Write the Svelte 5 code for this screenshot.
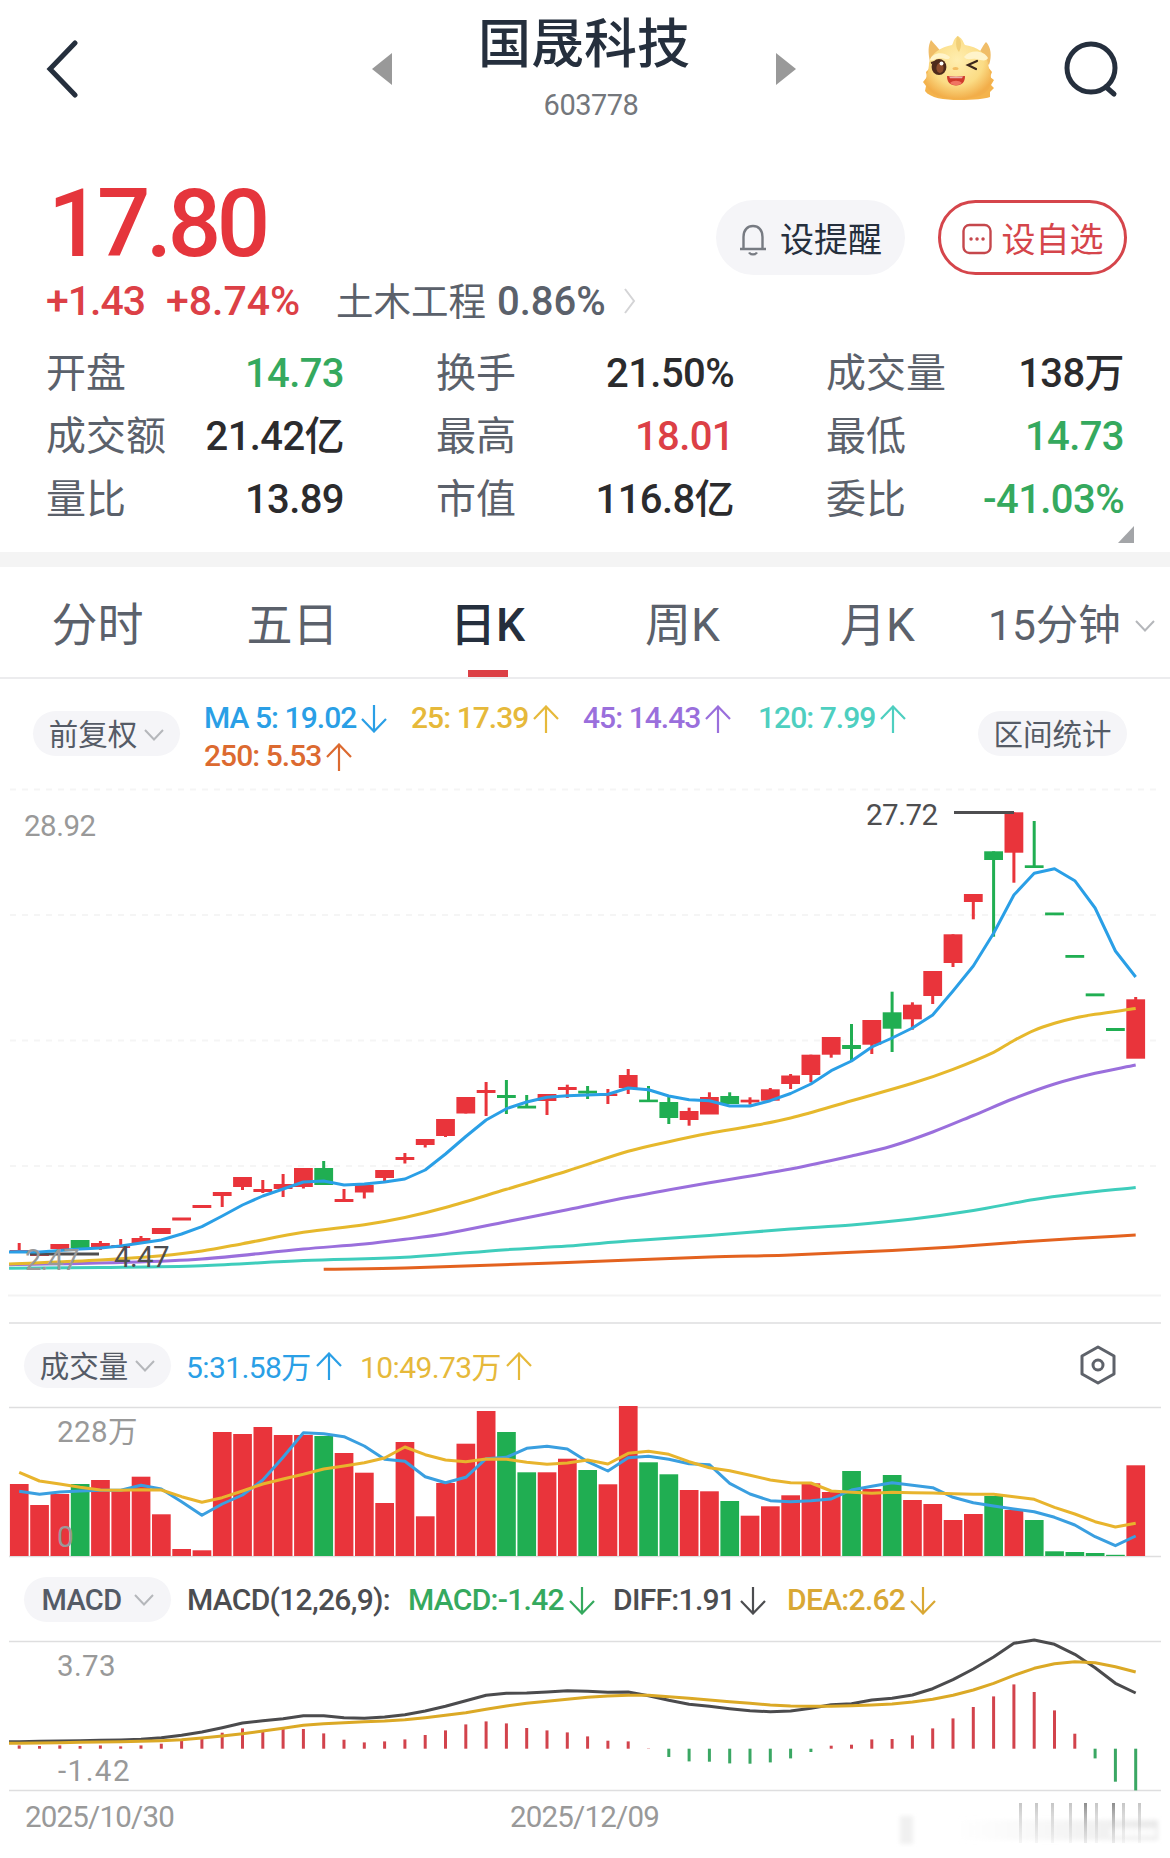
<script>
  const UP = '#e9343b';
  const DOWN = '#20ae52';
  const STEP = 20.3;
  const xAt = (i) => 19.2 + STEP * i;

  const stats = [
    ['开盘', '14.73', 'down'], ['换手', '21.50%', ''], ['成交量', '138万', ''],
    ['成交额', '21.42亿', ''], ['最高', '18.01', 'up'], ['最低', '14.73', 'down'],
    ['量比', '13.89', ''], ['市值', '116.8亿', ''], ['委比', '-41.03%', 'down']
  ];

  const tabs = ['分时', '五日', '日K', '周K', '月K'];

  const maLegend = [
    { text: 'MA 5: 19.02', dir: 'down', color: 'blue' },
    { text: '25: 17.39', dir: 'up', color: 'gold' },
    { text: '45: 14.43', dir: 'up', color: 'purple' },
    { text: '120: 7.99', dir: 'up', color: 'teal' },
    { text: '250: 5.53', dir: 'up', color: 'orange' }
  ];

  // [body top, body bottom, wick top, wick bottom]
  const candles = [
    [1250, 1253, 1243, 1253], [1253, 1256, 1253, 1256], [1244, 1249, 1244, 1249], [1240, 1248, 1240, 1248],
    [1243, 1247, 1241, 1250], [1245, 1248, 1239, 1248], [1238, 1243, 1236, 1243], [1228, 1234, 1228, 1234],
    [1217.5, 1220.5, 1218, 1220], [1205, 1208, 1205, 1208], [1192, 1196, 1192, 1207], [1177, 1187, 1177, 1190],
    [1189, 1192, 1180, 1193], [1184, 1189, 1174, 1197], [1168, 1187, 1168, 1188.5], [1168, 1185, 1161, 1185],
    [1199, 1202, 1189, 1202], [1185, 1192.5, 1185, 1198.5], [1170, 1178, 1170, 1181], [1157, 1160, 1153, 1163.5],
    [1139, 1145, 1139, 1147.5], [1119, 1136, 1119, 1137], [1097, 1113.5, 1097, 1113.5], [1090, 1093, 1082, 1116],
    [1095, 1098, 1080, 1114], [1105.7, 1108.5, 1095, 1108], [1094, 1101, 1094, 1115], [1087, 1090, 1084.7, 1098],
    [1090.7, 1093.5, 1086, 1099], [1093.5, 1096, 1089, 1104], [1075, 1088, 1069, 1094], [1099.6, 1102.2, 1086, 1102],
    [1102, 1118, 1095, 1124], [1111, 1120, 1107.7, 1125.7], [1097, 1114.5, 1092.3, 1114], [1096, 1104, 1092.3, 1104],
    [1099.7, 1102.4, 1097.3, 1104.7], [1089.3, 1100.7, 1088, 1100], [1075.5, 1084, 1074, 1089], [1054.7, 1075, 1054.7, 1082.3],
    [1037, 1054.7, 1037, 1057.7], [1045, 1049, 1024, 1061], [1020, 1044.7, 1020, 1054], [1012.3, 1028.7, 991.7, 1052],
    [1004.7, 1019.3, 1002.3, 1029.7], [971, 996, 971, 1004], [934.3, 963, 934.3, 967], [894, 902, 894, 919.3],
    [851.3, 860, 851.3, 936.7], [812.3, 852.7, 812.3, 882.7], [865.3, 868, 821, 868], [912.5, 915.3, 913, 915],
    [955, 957.8, 955, 957], [993.4, 996.3, 994, 996], [1028, 1031, 1028, 1030], [999.3, 1058.7, 997, 1058]
  ];

  const falling = new Set([3, 15, 24, 25, 28, 31, 32, 35, 41, 43, 48, 50, 51, 52, 53, 54]);
  const tone = (i) => (falling.has(i) ? DOWN : UP);

  const volumes = [
    72, 51, 62, 72, 76, 66, 79.3, 41.7, 7, 5.7, 124, 122, 129, 121, 121, 120, 103, 83.3, 53, 114, 39.7, 73,
    112.3, 145, 124, 83.7, 83.7, 97.3, 86, 71.7, 150, 93.7, 81.7, 66, 64.7, 55, 40.3, 49.7, 60.7, 72.7, 64,
    85, 67, 81, 56, 52, 36, 42, 60, 46, 36, 4.7, 4, 3, 1.2, 90.7
  ];

  const histogram = [
    3.3, 2.7, 3.3, 2.7, 3.3, 2.3, 3.3, 5, 7.7, 10.3, 16, 20.3, 17, 19.7, 19.7, 15.3, 9, 6.3, 7.3, 9.3, 13.7,
    18.3, 24.3, 27.3, 25.3, 20.7, 18.3, 16.3, 12.3, 8, 7.3, 0.3, -8.3, -12.7, -13, -14.7, -15, -13.7, -9.7,
    -3.3, 3, 4, 9.3, 9.7, 13.3, 20.3, 30.3, 41.7, 52.3, 64.3, 56.7, 38.3, 15, -9.7, -33, -41.7
  ];

  // Slow averages are sampled sparsely as { index: y } and smoothed
  const slowLines = [
    { color: '#e3621f', pts: { 15: 1269.3, 19: 1268, 27: 1262.5, 34: 1257, 38: 1255, 43: 1250.5, 46: 1247, 49: 1242.5, 52: 1238.5, 55: 1235 } },
    { color: '#3fcdbc', pts: { '-0.5': 1268.3, 4: 1267.5, 9: 1265.7, 14: 1260.5, 19: 1257.3, 24: 1249.7, 27: 1246, 30: 1241, 34: 1235.5, 38: 1229, 41: 1225, 44: 1219, 47: 1210.5, 50: 1199.5, 52: 1194, 55: 1187.5 } },
    { color: '#9a6fdc', pts: { '-0.5': 1264.7, 5: 1262.5, 9: 1259, 14: 1249, 17: 1244, 19: 1239.3, 21: 1233.7, 24: 1221.7, 27: 1209.7, 30: 1197.3, 34: 1182.7, 38: 1169, 41: 1156, 43: 1146, 45: 1132, 47: 1115.5, 49: 1098.5, 51: 1084, 53: 1073.3, 55: 1065 } },
    { color: '#e6b82c', pts: { '-0.5': 1264, 4: 1260, 7: 1255.7, 9: 1251, 11: 1243.7, 14: 1232.3, 17: 1224.7, 19: 1217.5, 21: 1207.5, 24: 1189.3, 27: 1171, 30: 1151.3, 32: 1141.7, 34: 1133.3, 36: 1126.3, 38: 1118, 41: 1100.7, 44: 1083.3, 46: 1069.3, 48: 1052.3, 49: 1040.5, 50: 1030.3, 51: 1023.3, 52: 1018, 53: 1014.3, 55: 1008.5 } }
  ];

  const ma5 = [
    1251.7, 1252, 1250.5, 1249, 1248, 1246, 1243, 1240, 1234, 1226.7, 1216, 1205, 1196, 1189, 1182, 1181, 1185,
    1184, 1182, 1179, 1170, 1154, 1136.5, 1120, 1108.7, 1102, 1097.3, 1095.7, 1095, 1094.3, 1088, 1089.7, 1096,
    1099.7, 1100.7, 1106, 1106, 1100.7, 1093.5, 1084, 1070.7, 1061, 1047, 1038, 1028, 1015, 991, 966, 933.3, 895,
    873.3, 868.7, 880.7, 908, 951, 977
  ];

  const scaled = (values, offset) => values.map((v) => v / 3 + offset);

  const volumeLines = [
    { color: '#3a9fe0', pts: scaled([514, 523, 516, 513, 511, 511, 496, 507, 545, 586, 552, 525, 480, 412, 338, 341, 350, 378, 418, 424, 470, 488, 472, 416, 412, 385, 379, 387, 425, 453, 413, 409, 418, 431, 434, 490, 522, 542, 545, 542, 537, 510, 499, 488, 496, 503, 532, 548, 558, 567, 575, 592, 615, 650, 677, 648], 1320) },
    { color: '#e8b42d', pts: scaled([457, 483, 492, 502, 510, 511, 509, 510, 530, 547, 533, 513, 492, 477, 463, 447, 438, 428, 414, 381, 404, 420, 425, 417, 418, 427, 433, 429, 420, 432, 400, 394, 403, 425, 443, 452, 466, 480, 488, 489, 513, 517, 520, 517, 518, 519, 521, 523, 523, 530, 538, 562, 582, 605, 621, 610], 1320) }
  ];

  const macdLines = [
    { color: '#4b4b4d', pts: scaled([515, 514, 513, 512, 511, 510, 508, 503, 496, 486, 473, 459, 452, 446, 437, 437, 443, 445, 441, 434, 423, 409, 392, 376, 370, 369, 366, 362, 364, 367, 366, 377, 391, 403, 409, 416, 422, 425, 423, 415, 404, 401, 390, 385, 375, 356, 329, 297, 261, 220, 210, 223, 253, 293, 340, 369], 1570) },
    { color: '#dba926', pts: scaled([520, 519, 518, 517, 516, 515, 514, 512, 509, 504, 498, 491, 483, 475, 466, 461, 458, 455, 453, 449, 443, 436, 428, 418, 408, 400, 394, 388, 382, 378, 376, 376, 380, 385, 390, 395, 400, 405, 408, 409, 409, 407, 405, 402, 396, 388, 376, 360, 340, 316, 295, 281, 275, 278, 290, 306], 1570) }
  ];

  const toPoints = (values) => values.map((y, i) => `${xAt(i).toFixed(1)},${y.toFixed(1)}`).join(' ');

  function toCurve(samples) {
    const p = Object.entries(samples)
      .map(([i, y]) => [xAt(Number(i)), y])
      .sort((a, b) => a[0] - b[0]);
    const slope = (k) => {
      const a = p[Math.max(k - 1, 0)];
      const b = p[Math.min(k + 1, p.length - 1)];
      return (b[1] - a[1]) / (b[0] - a[0]);
    };
    let d = `M${p[0]}`;
    for (let k = 1; k < p.length; k++) {
      const [x0, y0] = p[k - 1];
      const [x1, y1] = p[k];
      const dx = (x1 - x0) / 3;
      d += ` C${x0 + dx},${y0 + slope(k - 1) * dx} ${x1 - dx},${y1 - slope(k) * dx} ${x1},${y1}`;
    }
    return d;
  }

  const smudges = [1019, 1035, 1051, 1069, 1084, 1095, 1112, 1122, 1138];
</script>

{#snippet chevron()}
  <svg class="chevron" viewBox="0 0 20 12" width="20" height="12">
    <path d="M1 1 L10 10.5 L19 1" />
  </svg>
{/snippet}

{#snippet arrow(dir)}
  <svg class="arrow" viewBox="0 0 26 28" width="26" height="28">
    {#if dir === 'up'}
      <path d="M13 28 V2 M1 14 L13 1.5 L25 14" />
    {:else}
      <path d="M13 0 V26 M1 14 L13 26.5 L25 14" />
    {/if}
  </svg>
{/snippet}

<main>
  <header>
    <svg class="back" viewBox="0 0 32 58" width="32" height="58">
      <path d="M29 3 L4 29 L29 55" />
    </svg>
    <svg class="prev" viewBox="0 0 20 32" width="20" height="32"><path d="M20 0 V32 L0 16 Z" /></svg>
    <div class="title">
      <h1>国晟科技</h1>
      <span>603778</span>
    </div>
    <svg class="next" viewBox="0 0 20 32" width="20" height="32"><path d="M0 0 V32 L20 16 Z" /></svg>
    <svg class="mascot" viewBox="0 0 74 68" width="74" height="68">
      <defs>
        <radialGradient id="skin" cx="0.48" cy="0.38" r="0.62">
          <stop offset="0" stop-color="#ffeeb0" />
          <stop offset="0.65" stop-color="#fbdc85" />
          <stop offset="1" stop-color="#f2ae4a" />
        </radialGradient>
      </defs>
      <path fill="#f0bd68" d="M8 28 C6 18 6 12 9 6 C12 10 17 14 20 20 Z M56 20 C60 15 61 11 64 8 C69 13 70 22 67 31 Z" />
      <path fill="#f4b34c" d="M8 34 L4 38 L5 43 L1 48 L4 52 L3 57 C8 64 22 66 37 66 C53 66 62 65 68 63 L68 58 L72 54 L69 51 L72 46 L68 43 L70 38 L66 33 Z" />
      <path fill="url(#skin)" d="M7 29 C9 19 19 13 30 11 C32 8 31 5 36 2 C41 5 41 8 43 11 C56 13 64 19 66 29 C67 37 70 42 69 49 C67 60 55 65 37 65 C20 65 5 61 4 48 C4 40 7 37 7 29 Z" />
      <path fill="#f1cf78" d="M35 2 C40 5 40 12 37 18 C33 14 34 7 35 2 Z" />
      <path fill="#fff4cb" d="M8 26 C10 18 22 17 28 23 C27 27 22 24 18 24 C14 24 10 28 8 26 Z M42 23 C48 15 62 16 66 24 C64 28 59 26 54 25 C50 24 45 27 42 23 Z" />
      <ellipse cx="17" cy="33" rx="7.4" ry="8" fill="#4e2a1c" />
      <ellipse cx="18" cy="34" rx="3.6" ry="5" fill="#8d4c2d" />
      <circle cx="19.5" cy="29.5" r="2" fill="#fff" />
      <path d="M9 29 L13 28" stroke="#4e2a1c" stroke-width="2" />
      <path d="M55 27 L46 31 L54 35" fill="none" stroke="#3b261b" stroke-width="2.2" stroke-linecap="round" />
      <ellipse cx="33.5" cy="34.5" rx="3" ry="1.6" fill="#f3bd62" />
      <path d="M25 42 C31 42.5 37 42.5 43 42 C43 48 40 51.5 34 51.5 C28 51.5 25 48 25 42 Z" fill="#cf3a2c" />
      <path d="M27 42.6 H41 L40 44.2 H28 Z" fill="#fff" opacity="0.6" />
      <path d="M28 49 C31 46 37 46 40 49 C37 52 31 52 28 49 Z" fill="#f07462" />
    </svg>
    <svg class="search" viewBox="0 0 54 58" width="54" height="58">
      <circle cx="27" cy="27" r="24" />
      <path d="M42 46 L50 53" />
    </svg>
  </header>

  <section class="quote">
    <div class="price-row">
      <strong>17.80</strong>
      <button class="remind">
        <svg viewBox="0 0 28 32" width="28" height="32">
          <path d="M4.5 25 V13 C4.5 6 8.5 2 14 2 C19.5 2 23.5 6 23.5 13 V25 M1 25 H27 M10 28.5 C11.5 31 16.5 31 18 28.5" />
        </svg>
        设提醒
      </button>
      <button class="watch">
        <svg viewBox="0 0 30 32" width="30" height="32">
          <rect x="1.5" y="2" width="27" height="28" rx="6" />
          <path class="dots" d="M9 16 h.1 M15 16 h.1 M21 16 h.1" />
        </svg>
        设自选
      </button>
    </div>
    <div class="change">
      <span class="up amount">+1.43</span>
      <span class="up percent">+8.74%</span>
      <span class="sector">土木工程</span>
      <span class="sector-rate">0.86%</span>
      <svg viewBox="0 0 12 26" width="12" height="26"><path d="M1 1 L10 13 L1 25" /></svg>
    </div>
    <dl>
      {#each stats as [label, value, cls]}
        <div class="stat">
          <dt>{label}</dt>
          <dd class={cls}>{value}</dd>
        </div>
      {/each}
    </dl>
    <svg class="corner" viewBox="0 0 17 17" width="17" height="17"><path d="M16 0 V17 H0 Z" /></svg>
  </section>

  <nav>
    {#each tabs as tab}
      <div class="tab" class:active={tab === '日K'}>{tab}</div>
    {/each}
    <div class="tab more">15分钟{@render chevron()}</div>
  </nav>

  <section class="indicators">
    <div class="pill">前复权{@render chevron()}</div>
    <div class="ma-legend">
      {#each maLegend as m}
        <span class="item {m.color}">{m.text}{@render arrow(m.dir)}</span>
      {/each}
    </div>
    <div class="pill range">区间统计</div>
  </section>

  <svg class="chart" viewBox="0 780 1170 545" width="1170" height="545">
    {#each [789.5, 915, 1040.5, 1166] as y}
      <line class="dashed" x1="10" x2="1158" y1={y} y2={y} />
    {/each}
    <line class="faint" x1="8" x2="1161" y1="1295.5" y2="1295.5" />
    <line class="rule" x1="9" x2="1161" y1="1323" y2="1323" />
    {#each candles as [top, bottom, high, low], i}
      <rect x={xAt(i) - 1.5} y={high} width="3" height={low - high} fill={tone(i)} />
      <rect x={xAt(i) - 9.4} y={top} width="18.8" height={bottom - top} fill={tone(i)} />
    {/each}
    <text class="axis" x="24" y="836">28.92</text>
    <line class="callout" x1="954" x2="1014" y1="812.5" y2="812.5" />
    <text class="mark" x="866" y="825">27.72</text>
    <line class="callout" x1="30" x2="99" y1="1254" y2="1254" />
    {#each slowLines as line}
      <path d={toCurve(line.pts)} stroke={line.color} />
    {/each}
    <polyline points={`9,1252 ${toPoints(ma5)}`} stroke="#2a9fe6" />
    <text class="axis" x="25" y="1270" textLength="54">2.47</text>
    <text class="mark" x="114" y="1267" textLength="55">4.47</text>
  </svg>

  <section class="sub-head volume">
    <div class="pill">成交量{@render chevron()}</div>
    <span class="item blue">5:31.58万{@render arrow('up')}</span>
    <span class="item gold">10:49.73万{@render arrow('up')}</span>
    <svg class="settings" viewBox="0 0 36 40" width="36" height="40">
      <path d="M18 2 L34 11 V29 L18 38 L2 29 V11 Z" />
      <circle cx="18" cy="20" r="5" />
    </svg>
  </section>

  <svg class="chart" viewBox="0 1405 1170 155" width="1170" height="155">
    <line class="rule" x1="9" x2="1161" y1="1407.5" y2="1407.5" />
    <line class="rule" x1="9" x2="1161" y1="1556.5" y2="1556.5" />
    {#each volumes as v, i}
      <rect x={xAt(i) - 9.3} y={1556 - v} width="18.7" height={v} fill={tone(i)} />
    {/each}
    {#each volumeLines as line}
      <polyline points={toPoints(line.pts)} stroke={line.color} />
    {/each}
    <text class="axis" x="57" y="1442" textLength="80">228万</text>
    <text class="axis" x="57" y="1547">0</text>
  </svg>

  <section class="sub-head macd">
    <div class="pill">MACD{@render chevron()}</div>
    <span class="item dark">MACD(12,26,9):</span>
    <span class="item green">MACD:-1.42{@render arrow('down')}</span>
    <span class="item dark">DIFF:1.91{@render arrow('down')}</span>
    <span class="item amber">DEA:2.62{@render arrow('down')}</span>
  </section>

  <svg class="chart" viewBox="0 1638 1170 156" width="1170" height="156">
    <line class="rule" x1="9" x2="1161" y1="1641.5" y2="1641.5" />
    <line class="rule" x1="9" x2="1161" y1="1790.5" y2="1790.5" />
    {#each histogram as h, i}
      <rect x={xAt(i) - 1.5} y={h > 0 ? 1748.7 - h : 1748.7} width="3" height={Math.abs(h)} fill={h > 0 ? '#d2434c' : '#3aa763'} />
    {/each}
    {#each macdLines as line}
      <polyline points={`9,${line.pts[0]} ${toPoints(line.pts)}`} stroke={line.color} />
    {/each}
    <text class="axis" x="57" y="1676" textLength="58">3.73</text>
    <text class="axis" x="58" y="1781" textLength="71">-1.42</text>
  </svg>

  <footer>
    <time>2025/10/30</time>
    <time>2025/12/09</time>
    <svg viewBox="890 1796 280 56" width="280" height="56">
      <defs>
        <linearGradient id="fade" x1="0" y1="0" x2="0" y2="1">
          <stop offset="0" stop-color="#8d8d8d" />
          <stop offset="1" stop-color="#cfcfcf" stop-opacity="0.4" />
        </linearGradient>
        <linearGradient id="haze" x1="0" y1="0" x2="1" y2="0">
          <stop offset="0" stop-color="#f4f4f4" stop-opacity="0.1" />
          <stop offset="1" stop-color="#e9e9e9" />
        </linearGradient>
        <filter id="soft"><feGaussianBlur stdDeviation="2" /></filter>
      </defs>
      <g filter="url(#soft)">
        <rect x="900" y="1818" width="13" height="28" fill="#f0f0f0" />
        <rect x="960" y="1822" width="198" height="20" fill="url(#haze)" />
        <rect x="1110" y="1830" width="46" height="9" fill="#fff" opacity="0.8" />
      </g>
      {#each smudges as x, i}
        <rect {x} y="1805" width="3" height="40" fill="url(#fade)" opacity={i === 4 || i === 6 ? 1 : 0.5} />
      {/each}
    </svg>
  </footer>
</main>

<style>
  :global(body) {
    margin: 0;
    background: #fff;
  }

  main {
    width: 1170px;
    height: 1858px;
    overflow: hidden;
    background: #fff;
    color: #5b616b;
    font-family: Roboto, 'Noto Sans CJK SC', sans-serif;
  }

  svg {
    display: block;
    flex: none;
    fill: none;
  }

  header {
    display: grid;
    grid-template-columns: 326px 20px 384px 20px 127px 142px 54px;
    height: 138px;
    padding-left: 46px;
  }

  .back {
    margin-top: 40px;
    stroke: #252f3d;
    stroke-width: 5;
    stroke-linecap: round;
  }

  .prev,
  .next {
    margin-top: 53px;
    fill: #999;
  }

  .title {
    display: flex;
    flex-direction: column;
    align-items: center;
  }

  h1 {
    margin: 0;
    padding-top: 13px;
    color: #252f3d;
    font-size: 53px;
    font-weight: 500;
    line-height: 64px;
  }

  .title span {
    padding-left: 14px;
    color: #74777c;
    font-size: 29px;
    letter-spacing: -0.5px;
    line-height: 57px;
  }

  .mascot {
    grid-column: 6;
    margin: 34px 0 0 -1px;
  }

  .search {
    margin-top: 41px;
    margin-left: -1px;
    stroke: #252f3d;
    stroke-width: 5;
    stroke-linecap: round;
  }

  .quote {
    box-sizing: border-box;
    height: 429px;
    padding: 37px 48px 0 46px;
    border-bottom: 15px solid #f4f4f4;
  }

  .price-row {
    display: flex;
    height: 98px;
  }

  strong {
    flex: 1;
    padding-left: 2px;
    color: #e5353c;
    font-size: 94px;
    font-weight: 500;
    letter-spacing: -4.4px;
    line-height: 98px;
  }

  button {
    display: flex;
    align-items: center;
    justify-content: center;
    box-sizing: border-box;
    width: 189px;
    height: 75px;
    margin: 25px -5px 0 38px;
    padding: 0 0 1px;
    gap: 13px;
    border: 0;
    border-radius: 38px;
    background: #f5f5f8;
    color: #252f3d;
    font: inherit;
    font-size: 34px;
  }

  button svg {
    stroke: #777b82;
    stroke-width: 2.4;
  }

  .remind svg {
    margin-top: 6px;
  }

  .watch {
    gap: 10px;
    border: 3px solid #d5454b;
    background: #fff;
    color: #d5454b;
  }

  .watch svg {
    margin-top: 4px;
    stroke: #c5474c;
  }

  .dots {
    stroke-width: 3.4;
    stroke-linecap: round;
  }

  .change {
    display: flex;
    align-items: center;
    height: 56px;
    font-size: 41px;
    font-weight: 500;
    letter-spacing: -0.7px;
  }

  .amount {
    width: 120px;
    letter-spacing: -1px;
  }

  .percent {
    width: 170px;
    letter-spacing: 0;
  }

  .sector {
    width: 161px;
    margin-top: -6px;
    font-size: 37.5px;
    font-weight: 400;
    letter-spacing: 0;
  }

  .sector-rate {
    width: 127px;
    font-size: 40px;
    letter-spacing: 0;
  }

  .change svg {
    stroke: #d4d4d6;
    stroke-width: 2;
  }

  dl {
    display: grid;
    grid-template-columns: repeat(3, 298px);
    column-gap: 92px;
    margin: 13px 0 0;
  }

  .stat {
    display: flex;
    justify-content: space-between;
    height: 63px;
    font-size: 40px;
    line-height: 63px;
    white-space: nowrap;
  }

  dd {
    margin: 0;
    color: #2b2b2d;
    font-weight: 500;
    letter-spacing: -0.6px;
  }

  .up,
  dd.up {
    color: #dc4046;
  }

  dd.down {
    color: #35a95e;
  }

  .corner {
    margin: -5px -13px 0 auto;
    fill: #a3a5a8;
  }

  nav {
    display: grid;
    grid-template-columns: repeat(6, 195px);
    height: 110px;
    border-bottom: 2px solid #ececee;
    font-size: 46px;
  }

  .tab {
    display: flex;
    flex-direction: column;
    align-items: center;
    line-height: 117px;
    white-space: nowrap;
  }

  .active {
    color: #252f3d;
    font-weight: 500;
  }

  .active::after {
    width: 40px;
    height: 7px;
    margin-top: -14px;
    background: #dc4046;
    content: '';
  }

  .more {
    flex-direction: row;
    padding-left: 13px;
    font-size: 42.5px;
    gap: 14px;
  }

  .chevron {
    stroke: #b5b7bb;
    stroke-width: 2;
  }

  .indicators {
    display: flex;
    box-sizing: border-box;
    height: 101px;
    padding: 32px 43px 0 33px;
  }

  .pill {
    display: flex;
    align-items: center;
    justify-content: center;
    box-sizing: border-box;
    width: 147px;
    height: 45px;
    padding-bottom: 3px;
    gap: 7px;
    border-radius: 23px;
    background: #f5f5f8;
    color: #555b66;
    font-size: 29.5px;
    white-space: nowrap;
  }

  .pill .chevron {
    margin-top: 5px;
  }

  .ma-legend {
    display: grid;
    flex: 1;
    grid-template-columns: 207px 172px 175px 200px;
    grid-auto-rows: 38px;
    margin: -13px 0 0 24px;
  }

  .item {
    display: flex;
    align-items: center;
    gap: 5px;
    font-size: 30px;
    font-weight: 500;
    letter-spacing: -0.95px;
    white-space: nowrap;
  }

  .arrow {
    margin-top: 3px;
    stroke: currentColor;
    stroke-width: 2.2;
  }

  .range {
    width: 149px;
  }

  .blue { color: #2a9fe6; }
  .gold { color: #e6b93a; }
  .purple { color: #9a6fdc; }
  .teal { color: #4ecfc0; }
  .orange { color: #dc6a30; }
  .green { color: #35a95e; }
  .dark { color: #4c4d50; }
  .amber { color: #d9a834; }

  .chart polyline,
  .chart path {
    stroke-width: 3;
    stroke-linejoin: round;
  }

  .chart text {
    font-size: 29.5px;
    letter-spacing: -0.5px;
  }

  .axis {
    fill: #999;
  }

  .mark {
    fill: #4e4e50;
  }

  .dashed {
    stroke: #f5f5f5;
    stroke-width: 2;
    stroke-dasharray: 6 6;
  }

  .faint {
    stroke: #f3f3f3;
    stroke-width: 2;
  }

  .rule {
    stroke: #dededf;
    stroke-width: 1.5;
  }

  .callout {
    stroke: #4e4e50;
    stroke-width: 3;
  }

  .sub-head {
    display: grid;
    align-items: center;
    box-sizing: border-box;
    padding-left: 24px;
  }

  .volume {
    grid-template-columns: 162px 174px 720px auto;
    height: 80px;
  }

  .volume .item {
    padding-bottom: 1px;
    font-weight: 400;
    letter-spacing: -0.6px;
  }

  .settings {
    stroke: #5e626a;
    stroke-width: 3;
    stroke-linejoin: round;
  }

  .macd {
    grid-template-columns: 163px 221px 205px 174px auto;
    height: 78px;
    padding-top: 1px;
  }

  .macd .item {
    letter-spacing: -0.7px;
  }

  .macd .pill {
    padding-bottom: 0;
    gap: 12px;
    font-size: 29px;
    font-weight: 500;
    letter-spacing: -0.6px;
  }

  .macd .pill .chevron {
    margin-top: 0;
  }

  footer {
    display: grid;
    grid-template-columns: 485px 380px 280px;
    height: 64px;
    padding-left: 25px;
    color: #999;
    font-size: 29.5px;
    letter-spacing: -0.8px;
    line-height: 46px;
  }
</style>
